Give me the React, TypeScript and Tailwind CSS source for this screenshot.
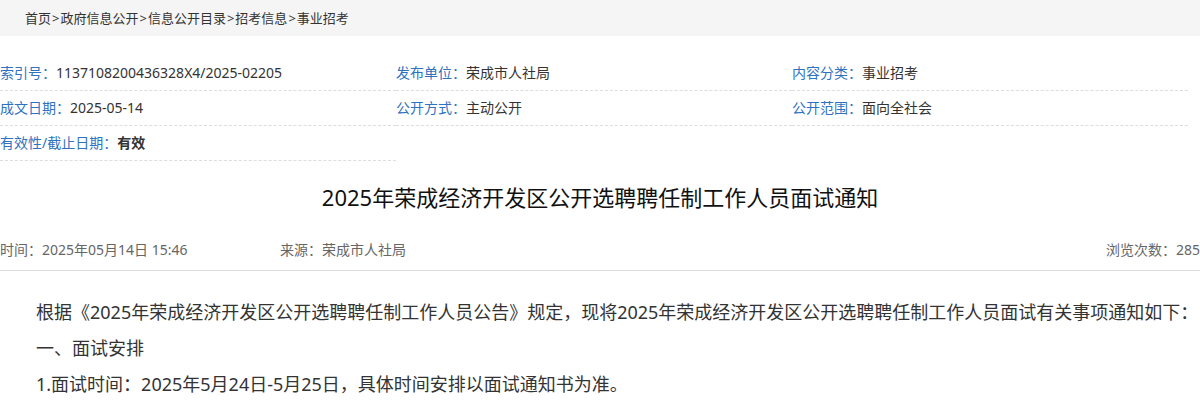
const font = { fontFamily: '"Noto Sans", "Noto Sans CJK SC", sans-serif' };

const meta: { label: string; value: string; bold?: boolean }[] = [
  { label: "索引号：", value: "1137108200436328X4/2025-02205" },
  { label: "发布单位：", value: "荣成市人社局" },
  { label: "内容分类：", value: "事业招考" },
  { label: "成文日期：", value: "2025-05-14" },
  { label: "公开方式：", value: "主动公开" },
  { label: "公开范围：", value: "面向全社会" },
  { label: "有效性/截止日期：", value: "有效", bold: true },
];

const crumbs = ["首页", "政府信息公开", "信息公开目录", "招考信息", "事业招考"];

export default function App() {
  return (
    <div className="w-[1200px] h-[400px] overflow-hidden bg-white" style={font}>
      {/* breadcrumb */}
      <div className="h-[36px] bg-[#f5f5f5] pl-[25px] flex items-center text-[13px] leading-[20px] text-[#333]">
        {crumbs.map((c, i) => (
          <span key={c}>
            {i > 0 && <span className="px-[1px]">&gt;</span>}
            {c}
          </span>
        ))}
      </div>

      {/* metadata table */}
      <div className="mt-[20px] w-[1188px] grid grid-cols-3 text-[14px] leading-[20px]">
        {meta.map((m) => (
          <div
            key={m.label}
            className="h-[35px] flex items-center border-b border-dashed border-[#ddd]"
          >
            <span className="text-[#2e72c0]">{m.label}</span>
            <span className={m.bold ? "font-bold text-[#333]" : "text-[#333]"}>{m.value}</span>
          </div>
        ))}
      </div>

      {/* title */}
      <h1 className="mt-[21px] text-center text-[22px] leading-[30px] text-[#111]">
        2025年荣成经济开发区公开选聘聘任制工作人员面试通知
      </h1>

      {/* info line */}
      <div className="mt-[26px] leading-[24px] pb-[8px] border-b border-[#ddd] flex text-[14px] text-[#666]">
        <span className="w-[280px]">时间：2025年05月14日 15:46</span>
        <span>来源：荣成市人社局</span>
        <span className="ml-auto">浏览次数：285</span>
      </div>

      {/* body */}
      <div className="pt-[23px] pl-[36px] text-[18px] leading-[36px] text-[#333]">
        <p>
          根据《2025年荣成经济开发区公开选聘聘任制工作人员公告》规定，现将2025年荣成经济开发区公开选聘聘任制工作人员面试有关事项通知如下：
        </p>
        <p>一、面试安排</p>
        <p>1.面试时间：2025年5月24日-5月25日，具体时间安排以面试通知书为准。</p>
      </div>
    </div>
  );
}
